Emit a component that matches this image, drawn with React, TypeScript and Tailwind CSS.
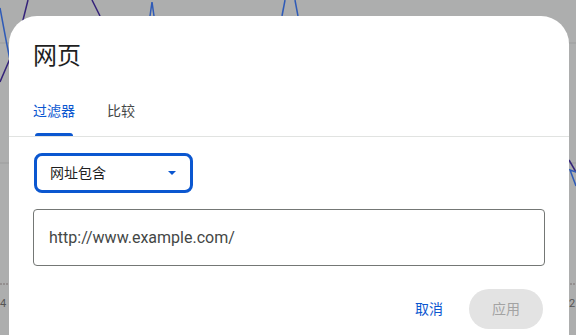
import React from "react";

function ChartBackdrop() {
  return (
    <svg className="absolute inset-0" width="576" height="335" viewBox="0 0 576 335">
      <line x1="0" y1="43" x2="576" y2="43" stroke="#9c9d9d" strokeWidth="1" />
      <line x1="0" y1="163" x2="576" y2="163" stroke="#9c9d9d" strokeWidth="1" />
      <line x1="0" y1="284" x2="576" y2="284" stroke="#7a7070" strokeWidth="1" strokeDasharray="2 1" />
      <polyline points="0,8 6,40 10,60" fill="none" stroke="#2f5bb7" strokeWidth="1.5" />
      <polyline points="28,0 18,40 0,82" fill="none" stroke="#35237a" strokeWidth="1.5" />
      <polyline points="92,0 100,16" fill="none" stroke="#35237a" strokeWidth="1.5" />
      <polyline points="150,16 152,2 154,16" fill="none" stroke="#2f5bb7" strokeWidth="1.5" />
      <polyline points="282,16 285,0" fill="none" stroke="#2f5bb7" strokeWidth="1.5" />
      <polyline points="295,0 298,16" fill="none" stroke="#2f5bb7" strokeWidth="1.5" />
      <polyline points="569,160 576,172" fill="none" stroke="#35237a" strokeWidth="1.5" />
      <polyline points="576,172 570,170 576,186" fill="none" stroke="#2f5bb7" strokeWidth="1.5" />
      <text x="0" y="307" fontSize="11" fill="#555" fontFamily="Roboto, sans-serif">4</text>
      <text x="569" y="307" fontSize="11" fill="#555" fontFamily="Roboto, sans-serif">2</text>
    </svg>
  );
}

function App() {
  return (
    <div
      className="relative w-[576px] h-[335px] overflow-hidden bg-[#adaeae]"
      style={{ fontFamily: "Roboto, 'Noto Sans CJK SC', sans-serif" }}
    >
      <ChartBackdrop />
      <div className="absolute left-[9px] top-[16px] w-[560px] h-[340px] bg-white rounded-t-[28px]">
        <h2 className="pl-[24px] pt-[24px] text-[24px] leading-[32px] text-[#1f1f1f]">网页</h2>
        <div className="flex mt-[29px] pl-[24px] gap-[32px] border-b border-[#e1e3e1]">
          <div className="flex flex-col items-center">
            <span className="text-[14px] leading-[20px] text-[#0b57d0]">过滤器</span>
            <div className="mt-[12px] h-[3px] w-[38px] rounded-t-[3px] bg-[#0b57d0]" />
          </div>
          <div className="flex flex-col items-center">
            <span className="text-[14px] leading-[20px] text-[#444746]">比较</span>
          </div>
        </div>
        <div className="px-[24px] pt-[16px]">
          <div className="flex items-center justify-between w-[159px] h-[40px] ml-[1px] pl-[13px] pr-[14px] border-[3px] border-[#0b57d0] rounded-[8px]">
            <span className="text-[14px] text-[#1f1f1f]">网址包含</span>
            <svg width="8" height="4" viewBox="0 0 8 4">
              <path d="M0 0 L8 0 L4 4 Z" fill="#0b57d0" />
            </svg>
          </div>
          <div className="mt-[16px] flex items-center h-[57px] w-[512px] px-[15px] border border-[#747775] rounded-[4px]">
            <span className="text-[16px] text-[#444746]">http://www.example.com/</span>
          </div>
          <div className="flex items-center justify-end gap-[26px] mt-[23px] pr-[2px]">
            <span className="text-[14px] text-[#0b57d0]">取消</span>
            <div className="flex items-center justify-center w-[74px] h-[40px] rounded-full bg-[#e3e3e3] text-[14px] text-[#a3a3a3]">
              应用
            </div>
          </div>
        </div>
      </div>
    </div>
  );
}

export default App;
